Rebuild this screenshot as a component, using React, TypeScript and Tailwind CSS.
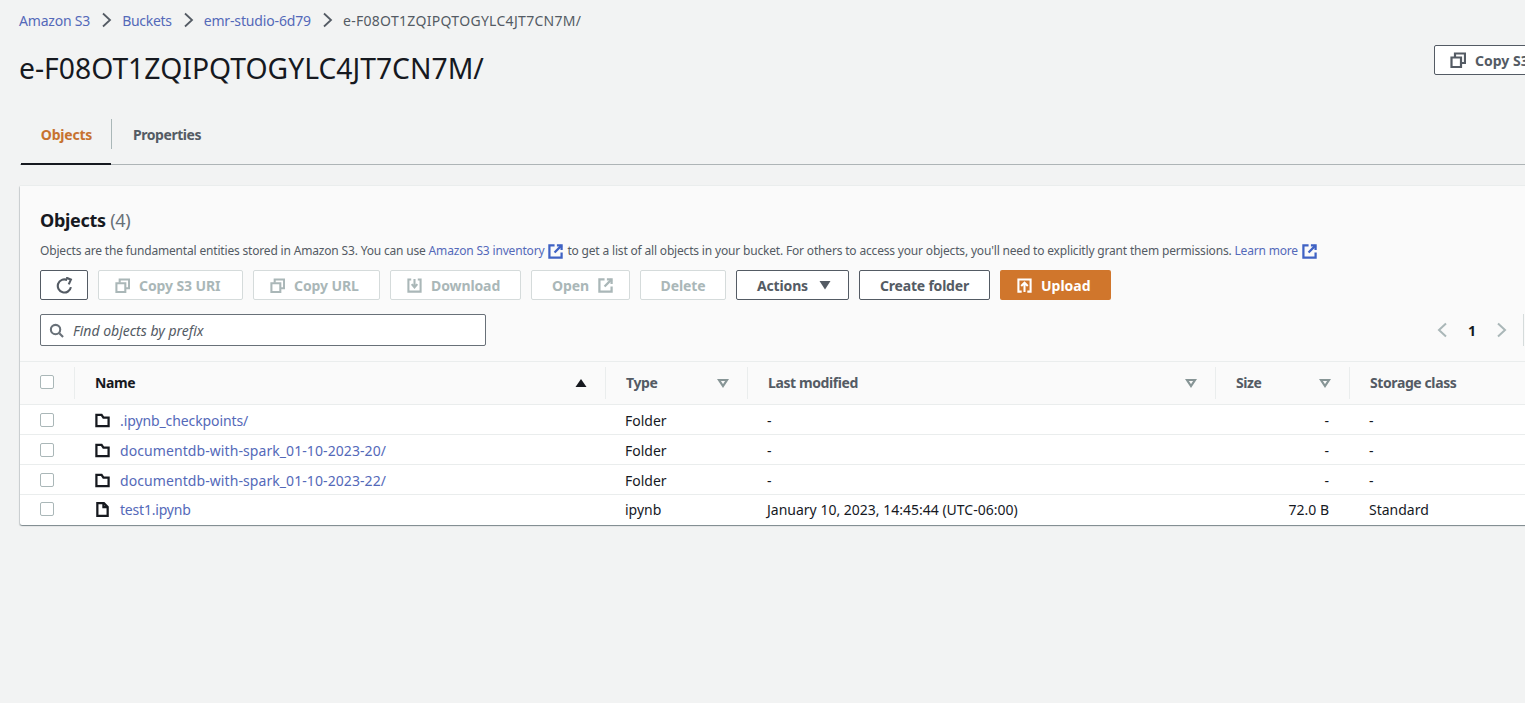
import React from "react";

const font = "font-['Noto_Sans',sans-serif]";

const CopyIcon = ({ className = "" }: { className?: string }) => (
  <svg viewBox="0 0 16 16" className={`w-4 h-4 ${className}`} fill="none" stroke="currentColor" strokeWidth="2.200">
    <path d="M1.500 5.500h9.500v9.500H1.500z" />
    <path d="M5 5V1.500h10v9.500H11" />
  </svg>
);

const ExternalIcon = ({ className = "" }: { className?: string }) => (
  <svg viewBox="0 0 16 16" className={`w-[15px] h-[15px] ${className}`} fill="none" stroke="currentColor" strokeWidth="2.400">
    <path d="M7 1.500H1.500v13H14.500V9" />
    <path d="M9.500 1.500H14.500V6.500" />
    <path d="M14.500 1.500L7 9" />
  </svg>
);

const Chevron = () => (
  <svg viewBox="0 0 12 16" className="w-3 h-4 text-[#545b64]" fill="none" stroke="currentColor" strokeWidth="1.800">
    <path d="M3 1.500L10 8l-7 6.500" />
  </svg>
);

const SortDown = () => (
  <svg viewBox="0 0 12 10" className="w-[12px] h-[10px] text-[#879596]" fill="none" stroke="currentColor" strokeWidth="2.200">
    <path d="M2 2h8L6 8z" />
  </svg>
);

const FolderIcon = () => (
  <svg viewBox="0 0 16 16" className="w-[15px] h-[15px] text-[#16191f]" fill="none" stroke="currentColor" strokeWidth="2.400">
    <path d="M1.500 2h5.500l2 3h5.500v9H1.500z" />
  </svg>
);

const FileIcon = () => (
  <svg viewBox="0 0 16 16" className="w-[15px] h-[15px] text-[#16191f]" fill="none" stroke="currentColor" strokeWidth="2.400">
    <path d="M2.500 1.200H9.500l4 4v9.600h-11z" />
    <path d="M9 1.500V5.500h4.500" />
  </svg>
);

const Checkbox = () => <div className="w-[14px] h-[14px] rounded-[2px] border border-[#aab7b8] bg-white" />;

const DisabledButton = ({ w, icon, label, iconRight }: { w: string; icon?: React.ReactNode; label: string; iconRight?: React.ReactNode }) => (
  <div className={`${w} h-[30px] flex items-center gap-[9px] rounded-[2px] border border-[#d5dbdb] bg-white text-[#aab7b8] text-[14px] font-bold tracking-[-0.1px]`}>
    {icon}
    <span>{label}</span>
    {iconRight}
  </div>
);

const columns = "grid grid-cols-[54px_531px_142px_468px_134px_300px]";

const HeaderCell = ({ label, sort, active }: { label: string; sort?: boolean; active?: boolean }) => (
  <div className="flex items-center h-[32px] border-l border-[#eaeded] pl-[20px] pr-[18px] justify-between">
    <span className={`text-[14px] font-bold tracking-[-0.4px] pb-[2px] ${active ? "text-[#16191f]" : "text-[#545b64]"}`}>{label}</span>
    {sort && <SortDown />}
    {active && (
      <svg viewBox="0 0 12 10" className="w-[12px] h-[10px] text-[#16191f]" fill="currentColor">
        <path d="M6 1l5.500 8H.5z" />
      </svg>
    )}
  </div>
);

const rows = [
  { name: ".ipynb_checkpoints/", spacing: "tracking-[-0.1px]", type: "Folder", date: "-", size: "-", cls: "-", file: false },
  { name: "documentdb-with-spark_01-10-2023-20/", spacing: "tracking-[0.08px]", type: "Folder", date: "-", size: "-", cls: "-", file: false },
  { name: "documentdb-with-spark_01-10-2023-22/", spacing: "tracking-[0.08px]", type: "Folder", date: "-", size: "-", cls: "-", file: false },
  { name: "test1.ipynb", spacing: "tracking-[-0.2px]", type: "ipynb", date: "January 10, 2023, 14:45:44 (UTC-06:00)", size: "72.0 B", cls: "Standard", file: true },
];

export default function App() {
  return (
    <div className={`${font} w-[1525px] h-[703px] overflow-hidden bg-[#f2f3f3] text-[#16191f] text-[14px]`}>
      <div className="w-[1640px] pl-[20px]">
        <div className="flex items-center gap-[10px] h-[20px] mt-[10px] -ml-px text-[#5469b9]">
          <span className="tracking-[-0.2px]">Amazon S3</span>
          <Chevron />
          <span className="tracking-[-0.3px]">Buckets</span>
          <Chevron />
          <span className="tracking-[-0.15px]">emr-studio-6d79</span>
          <Chevron />
          <span className="text-[#545b64] tracking-[0.3px]">e-F08OT1ZQIPQTOGYLC4JT7CN7M/</span>
        </div>

        <div className="flex items-start justify-between mt-[15px]">
          <h1 className="text-[28.3px] leading-[46px] font-normal -ml-px">e-F08OT1ZQIPQTOGYLC4JT7CN7M/</h1>
          <div className="w-[206px] h-[30px] flex items-center gap-[9px] pl-[15px] rounded-[2px] border border-[#545b64] bg-white text-[#545b64] font-bold">
            <CopyIcon />
            <span>Copy S3 URI</span>
          </div>
        </div>

        <div className="flex mt-[23px] h-[51px] border-b border-[#aeb4b6]">
          <div className="w-[90px] h-[51px] ml-px pl-px border-b-2 border-[#16191f] flex items-center justify-center">
            <span className="font-bold text-[#c7722f] tracking-[-0.2px] pb-[8px]">Objects</span>
          </div>
          <div className="h-[30px] mt-[5px] border-l border-[#aab7b8] pl-[21px] flex items-center">
            <span className="font-bold text-[#545b64] tracking-[-0.45px]">Properties</span>
          </div>
        </div>

        <div className="mt-[20px] rounded-[2px] border-t border-[#eaeded] bg-white shadow-[0_1px_1px_0_rgba(0,28,36,0.3),1px_1px_1px_0_rgba(0,28,36,0.15),-1px_1px_1px_0_rgba(0,28,36,0.15)]">
          <div className="bg-[#fafafa] h-[175px] pl-[20px] pt-[21px]">
            <div className="text-[18px] leading-[26px] font-bold tracking-[-0.3px]">
              Objects <span className="font-normal text-[#687078]">(4)</span>
            </div>
            <div className="flex items-center text-[12px] leading-[16px] mt-[10px] text-[#545b64] tracking-[-0.175px]">
              <span>Objects are the fundamental entities stored in Amazon S3. You can use&nbsp;</span>
              <span className="text-[#5469b9]">Amazon S3 inventory</span>
              <ExternalIcon className="text-[#3f62c4] ml-[4px] mr-[4px]" />
              <span>to get a list of all objects in your bucket. For others to access your objects, you'll need to explicitly grant them permissions.&nbsp;</span>
              <span className="text-[#5469b9]">Learn more</span>
              <ExternalIcon className="text-[#3f62c4] ml-[4px]" />
            </div>
            <div className="flex items-center mt-[11px] gap-[10px]">
              <div className="w-[48px] h-[30px] flex items-center justify-center rounded-[2px] border border-[#545b64] bg-white text-[#545b64]">
                <svg viewBox="0 0 16 16" className="w-[17px] h-[17px]" fill="none" stroke="currentColor" strokeWidth="2">
                  <path d="M14 9.500A6.200 6.200 0 1 1 10.500 2.800" />
                  <path d="M9.500 0.500L14 2.500l-2 4.500" />
                </svg>
              </div>
              <DisabledButton w="w-[145px] pl-[16px]" icon={<CopyIcon className="w-[15px] h-[15px]" />} label="Copy S3 URI" />
              <DisabledButton w="w-[127px] pl-[16px]" icon={<CopyIcon className="w-[15px] h-[15px]" />} label="Copy URL" />
              <DisabledButton
                w="w-[131px] pl-[16px]"
                icon={
                  <svg viewBox="0 0 16 16" className="w-[15px] h-[15px]" fill="none" stroke="currentColor" strokeWidth="2.200">
                    <path d="M4.500 1.500H1.500v13h13v-13h-3" />
                    <path d="M8 1v8M5 6.500L8 10l3-3.500" />
                  </svg>
                }
                label="Download"
              />
              <DisabledButton w="w-[99px] pl-[20px]" label="Open" iconRight={<ExternalIcon />} />
              <DisabledButton w="w-[86px] justify-center" label="Delete" />
              <div className="w-[113px] h-[30px] flex items-center gap-[11px] pl-[20px] rounded-[2px] border border-[#545b64] bg-white text-[#545b64] font-bold tracking-[-0.15px]">
                <span>Actions</span>
                <svg viewBox="0 0 12 10" className="w-3 h-[10px]" fill="currentColor">
                  <path d="M0.500 1h11L6 9.500z" />
                </svg>
              </div>
              <div className="w-[131px] h-[30px] flex items-center justify-center rounded-[2px] border border-[#545b64] bg-white text-[#545b64] font-bold tracking-[-0.2px]">
                Create folder
              </div>
              <div className="w-[111px] h-[30px] flex items-center gap-[9px] pl-[17px] rounded-[2px] bg-[#d0762c] text-white font-bold">
                <svg viewBox="0 0 16 16" className="w-[15px] h-[15px]" fill="none" stroke="currentColor" strokeWidth="2.200">
                  <path d="M5 14.500H1.500V1.500h13v13H11" />
                  <path d="M8 15V6M4.500 8.500L8 5l3.500 3.500" />
                </svg>
                <span>Upload</span>
              </div>
            </div>
            <div className="flex items-center mt-[14px]">
              <div className="w-[446px] h-[32px] flex items-center gap-[9px] pl-[8px] rounded-[2px] border border-[#687078] bg-white">
                <svg viewBox="0 0 16 16" className="w-[15px] h-[15px] text-[#687078]" fill="none" stroke="currentColor" strokeWidth="2.200">
                  <circle cx="7" cy="7" r="5" />
                  <path d="M11 11l4 4" />
                </svg>
                <span className="italic text-[#545b64] text-[14px]">Find objects by prefix</span>
              </div>
              <div className="flex items-center ml-[950px] h-[32px]">
                <svg viewBox="0 0 12 16" className="w-3 h-4 text-[#aab7b8]" fill="none" stroke="currentColor" strokeWidth="2">
                  <path d="M10 1.500L3 8l7 6.500" />
                </svg>
                <span className="font-bold w-[48px] text-center">1</span>
                <svg viewBox="0 0 12 16" className="w-3 h-4 text-[#aab7b8]" fill="none" stroke="currentColor" strokeWidth="2">
                  <path d="M2 1.500L9 8l-7 6.500" />
                </svg>
                <div className="ml-[15px] h-[32px] border-l border-[#d5dbdb]" />
              </div>
            </div>
          </div>

          <div className={`${columns} h-[44px] items-center bg-[#fafafa] border-y border-[#eaeded]`}>
            <div className="pl-[20px] h-[32px] pb-[2px] flex items-center"><Checkbox /></div>
            <HeaderCell label="Name" active />
            <HeaderCell label="Type" sort />
            <HeaderCell label="Last modified" sort />
            <HeaderCell label="Size" sort />
            <HeaderCell label="Storage class" />
          </div>

          {rows.map((row, i) => {
            const isLast = i === rows.length - 1;
            const cell = isLast ? "pb-px" : "pt-[2px]";
            return (
              <div key={row.name} className={`${columns} h-[30px] items-center ${isLast ? "" : "border-b border-[#eaeded]"}`}>
                <div className={`pl-[20px] flex items-center ${isLast ? "pb-[2px]" : ""}`}><Checkbox /></div>
                <div className={`pl-[21px] flex items-center gap-[10px] ${cell}`}>
                  {row.file ? <FileIcon /> : <FolderIcon />}
                  <span className={`text-[#5469b9] ${row.spacing}`}>{row.name}</span>
                </div>
                <div className={`pl-[20px] ${cell}`}>{row.type}</div>
                <div className={`pl-[20px] ${cell}`}>{row.date}</div>
                <div className={`pr-[20px] text-right ${cell}`}>{row.size}</div>
                <div className={`pl-[20px] ${cell}`}>{row.cls}</div>
              </div>
            );
          })}
        </div>
      </div>
    </div>
  );
}
